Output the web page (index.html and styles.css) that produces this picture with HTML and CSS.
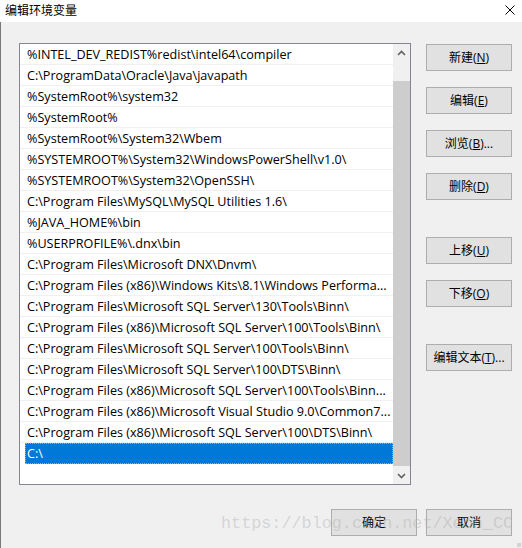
FILE: index.html
```html
<!DOCTYPE html>
<html lang="zh-CN">
<head>
<meta charset="utf-8">
<title>编辑环境变量</title>
<link rel="stylesheet" href="styles.css">
</head>
<body>
<div class="window">
  <div class="titlebar">
    <span class="title">编辑环境变量</span>
    <svg class="close" width="10" height="10" viewBox="0 0 10 10"><path d="M0.5 0.5 L9.5 9.5 M9.5 0.5 L0.5 9.5" stroke="#000" stroke-width="1" fill="none"/></svg>
  </div>
  <div class="content">
    <div class="main">
      <div class="listbox">
        <div class="rows">
          <div class="row"><span>%INTEL_DEV_REDIST%redist\intel64\compiler</span></div>
          <div class="row"><span>C:\ProgramData\Oracle\Java\javapath</span></div>
          <div class="row"><span>%SystemRoot%\system32</span></div>
          <div class="row"><span>%SystemRoot%</span></div>
          <div class="row"><span>%SystemRoot%\System32\Wbem</span></div>
          <div class="row"><span>%SYSTEMROOT%\System32\WindowsPowerShell\v1.0\</span></div>
          <div class="row"><span>%SYSTEMROOT%\System32\OpenSSH\</span></div>
          <div class="row"><span>C:\Program Files\MySQL\MySQL Utilities 1.6\</span></div>
          <div class="row"><span>%JAVA_HOME%\bin</span></div>
          <div class="row"><span>%USERPROFILE%\.dnx\bin</span></div>
          <div class="row"><span>C:\Program Files\Microsoft DNX\Dnvm\</span></div>
          <div class="row"><span>C:\Program Files (x86)\Windows Kits\8.1\Windows Performa...</span></div>
          <div class="row"><span>C:\Program Files\Microsoft SQL Server\130\Tools\Binn\</span></div>
          <div class="row"><span>C:\Program Files (x86)\Microsoft SQL Server\100\Tools\Binn\</span></div>
          <div class="row"><span>C:\Program Files\Microsoft SQL Server\100\Tools\Binn\</span></div>
          <div class="row"><span>C:\Program Files\Microsoft SQL Server\100\DTS\Binn\</span></div>
          <div class="row"><span>C:\Program Files (x86)\Microsoft SQL Server\100\Tools\Binn...</span></div>
          <div class="row"><span>C:\Program Files (x86)\Microsoft Visual Studio 9.0\Common7...</span></div>
          <div class="row"><span>C:\Program Files (x86)\Microsoft SQL Server\100\DTS\Binn\</span></div>
          <div class="row selected"><span class="sel">C:\</span></div>
        </div>
        <div class="scrollbar">
          <div class="arrow">
            <svg width="9" height="6" viewBox="0 0 9 6"><path d="M1 5 L4.5 1.5 L8 5" stroke="#606060" stroke-width="1.6" fill="none"/></svg>
          </div>
          <div class="track"><div class="thumb"></div></div>
          <div class="arrow">
            <svg width="9" height="6" viewBox="0 0 9 6"><path d="M1 1 L4.5 4.5 L8 1" stroke="#606060" stroke-width="1.6" fill="none"/></svg>
          </div>
        </div>
      </div>
      <div class="side">
        <button class="btn">新建(<u>N</u>)</button>
        <button class="btn">编辑(<u>E</u>)</button>
        <button class="btn">浏览(<u>B</u>)...</button>
        <button class="btn">删除(<u>D</u>)</button>
        <button class="btn gap-big">上移(<u>U</u>)</button>
        <button class="btn">下移(<u>O</u>)</button>
        <button class="btn gap-big">编辑文本(<u>T</u>)...</button>
      </div>
    </div>
    <div class="footer">
      <button class="btn">确定</button>
      <button class="btn">取消</button>
    </div>
    <div class="watermark">https://blog.csdn.net/Xeon_CC</div>
    <div class="grip"></div>
  </div>
</div>
</body>
</html>
```

FILE: styles.css
```css
* { box-sizing: border-box; }
html, body {
  margin: 0;
  padding: 0;
  width: 522px;
  height: 548px;
  overflow: hidden;
  background: #f0f0f0;
}
body {
  font-family: "Open Sans", "Noto Sans CJK SC", sans-serif;
  font-size: 12.6px;
  color: #000;
}
.window {
  width: 522px;
  height: 548px;
  display: flex;
  flex-direction: column;
}
.titlebar {
  height: 22px;
  background: #fff;
  display: flex;
  align-items: center;
  justify-content: space-between;
  padding: 0 7px 3px 5px;
}
.title {
  font-family: "Noto Sans CJK SC", sans-serif;
  font-size: 12px;
  line-height: 14px;
}
.close { display: block; margin-top: 1px; }
.content {
  flex: 1;
  position: relative;
  border-left: 1px solid #7a7a7a;
  background: #f0f0f0;
  padding: 21px 0 0 18px;
}
.main {
  display: flex;
  align-items: flex-start;
}
.listbox {
  width: 392px;
  height: 442px;
  border: 1px solid #828790;
  background: #fff;
  display: flex;
}
.rows {
  width: 373px;
  display: flex;
  flex-direction: column;
}
.row {
  height: 21px;
  border-bottom: 1px solid #f0f0f0;
  display: flex;
  align-items: center;
  padding-left: 7px;
  padding-top: 1px;
  white-space: nowrap;
  overflow: hidden;
  line-height: 20px;
}
.row.selected {
  padding-left: 5px;
  padding-top: 0;
  border-bottom: none;
}
.sel {
  flex: 1;
  height: 21px;
  background: #0078d7;
  color: #fff;
  padding-left: 2px;
  padding-top: 1px;
  outline: 1px dotted #e0a050;
  outline-offset: -1px;
  line-height: 20px;
}
.scrollbar {
  width: 17px;
  background: #f0f0f0;
  display: flex;
  flex-direction: column;
}
.arrow {
  height: 17px;
  display: flex;
  align-items: center;
  justify-content: center;
}
.track {
  flex: 1;
  padding-top: 20px;
}
.thumb {
  height: 385px;
  background: #cdcdcd;
}
.side {
  margin-left: 15px;
  display: flex;
  flex-direction: column;
  padding-top: 1px;
}
.btn {
  width: 86px;
  height: 27px;
  background: #e1e1e1;
  border: 1px solid #adadad;
  font-family: "Open Sans", "Noto Sans CJK SC", sans-serif;
  font-size: 12px;
  color: #000;
  padding: 0;
  margin: 0;
  line-height: 25px;
}
.side .btn + .btn { margin-top: 16px; }
.side .btn.gap-big { margin-top: 37px; }
.footer {
  display: flex;
  justify-content: flex-end;
  gap: 9px;
  padding-right: 10px;
  margin-top: 24px;
}
.watermark {
  position: absolute;
  left: 220px;
  top: 492px;
  font-family: "Liberation Mono", monospace;
  font-size: 16.8px;
  color: rgba(170, 170, 170, 0.4);
  pointer-events: none;
  white-space: nowrap;
}
.grip {
  position: absolute;
  right: 1px;
  bottom: 1px;
  width: 4px;
  height: 4px;
  background: radial-gradient(circle, #b0b0b0 0.6px, transparent 0.8px) 0 0 / 2px 2px;
}
```
